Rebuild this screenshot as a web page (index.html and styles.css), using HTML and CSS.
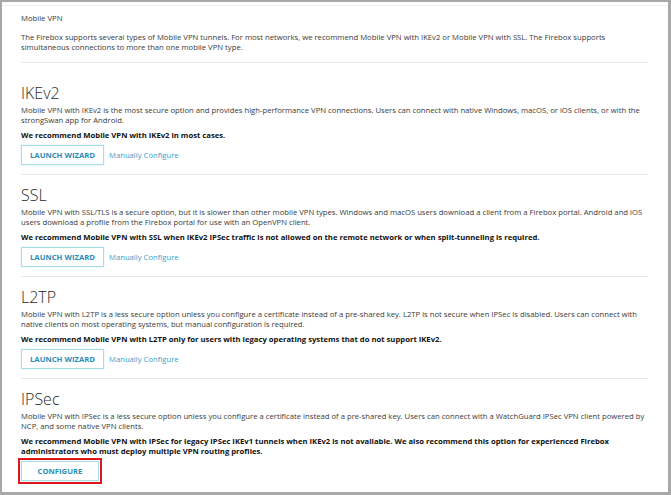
FILE: index.html
```html
<!DOCTYPE html>
<html lang="en">
<head>
  <meta charset="UTF-8">
  <meta name="viewport" content="width=device-width, initial-scale=1.0">
  <title>Mobile VPN</title>
  <link rel="stylesheet" href="styles.css">
</head>
<body>
  <div class="frame">
    <div class="topline"></div>
    <main class="content">
      <div class="intro">
        <div class="page-title">Mobile VPN</div>
        <p>The Firebox supports several types of Mobile VPN tunnels. For most networks, we recommend Mobile VPN with IKEv2 or Mobile VPN with SSL. The Firebox supports simultaneous connections to more than one mobile VPN type.</p>
      </div>

      <section class="vpn-type">
        <h2>IKEv2</h2>
        <p>Mobile VPN with IKEv2 is the most secure option and provides high-performance VPN connections. Users can connect with native Windows, macOS, or iOS clients, or with the strongSwan app for Android.</p>
        <p class="recommend">We recommend Mobile VPN with IKEv2 in most cases.</p>
        <div class="actions">
          <button class="btn-outline">Launch Wizard</button>
          <a href="#" class="link">Manually Configure</a>
        </div>
      </section>

      <section class="vpn-type">
        <h2>SSL</h2>
        <p>Mobile VPN with SSL/TLS is a secure option, but it is slower than other mobile VPN types. Windows and macOS users download a client from a Firebox portal. Android and iOS users download a profile from the Firebox portal for use with an OpenVPN client.</p>
        <p class="recommend">We recommend Mobile VPN with SSL when IKEv2 IPSec traffic is not allowed on the remote network or when split-tunneling is required.</p>
        <div class="actions">
          <button class="btn-outline">Launch Wizard</button>
          <a href="#" class="link">Manually Configure</a>
        </div>
      </section>

      <section class="vpn-type">
        <h2>L2TP</h2>
        <p>Mobile VPN with L2TP is a less secure option unless you configure a certificate instead of a pre-shared key. L2TP is not secure when IPSec is disabled. Users can connect with native clients on most operating systems, but manual configuration is required.</p>
        <p class="recommend">We recommend Mobile VPN with L2TP only for users with legacy operating systems that do not support IKEv2.</p>
        <div class="actions">
          <button class="btn-outline">Launch Wizard</button>
          <a href="#" class="link">Manually Configure</a>
        </div>
      </section>

      <section class="vpn-type">
        <h2>IPSec</h2>
        <p>Mobile VPN with IPSec is a less secure option unless you configure a certificate instead of a pre-shared key. Users can connect with a WatchGuard IPSec VPN client powered by NCP, and some native VPN clients.</p>
        <p class="recommend">We recommend Mobile VPN with IPSec for legacy IPSec IKEv1 tunnels when IKEv2 is not available. We also recommend this option for experienced Firebox administrators who must deploy multiple VPN routing profiles.</p>
        <div class="actions">
          <button class="btn-outline btn-wide highlighted">Configure</button>
        </div>
      </section>
    </main>
  </div>
</body>
</html>
```

FILE: styles.css
```css
/* Mobile VPN overview page */
body {
  margin: 0;
  padding: 0;
  background: #fff;
  font-family: 'Open Sans', 'Noto Sans', sans-serif;
  color: #3a3a3a;
}
.frame {
  box-sizing: border-box;
  width: 671px;
  height: 495px;
  border-style: solid;
  border-color: #a8a8a8;
  border-width: 2px 3px 3px 2px;
  overflow: hidden;
  background: #fff;
}
.topline {
  height: 3px;
  border-bottom: 1px solid #f0f0f0;
}
.content {
  padding: 0 20px 0 19px;
}
.intro {
  padding-top: 7px;
  padding-bottom: 10px;
  border-bottom: 1px solid #e8e8e8;
}
.page-title {
  font-size: 7.7px;
  line-height: 10px;
}
p {
  margin: 0;
  font-size: 7.7px;
  line-height: 10px;
}
.intro p {
  margin-top: 9px;
}
.vpn-type {
  padding: 10px 0 9px;
  border-bottom: 1px solid #e8e8e8;
}
.vpn-type:first-of-type {
  padding-top: 20px;
}
.vpn-type:last-of-type {
  border-bottom: none;
}
h2 {
  margin: 0 0 2px;
  font-size: 16px;
  line-height: 20px;
  font-weight: 300;
  color: #2a2a2a;
}
.recommend {
  margin-top: 5px;
  font-weight: bold;
  color: #111;
}
.actions {
  margin-top: 5px;
  display: flex;
  align-items: center;
  gap: 5px;
}
.btn-outline {
  box-sizing: border-box;
  height: 20px;
  padding: 0 8px;
  background: #fff;
  border: 1px solid #a4dfe8;
  box-shadow: 0 0 1px rgba(120, 200, 215, 0.6);
  color: #2a8db8;
  font-family: inherit;
  font-size: 7.7px;
  font-weight: bold;
  text-transform: uppercase;
  cursor: pointer;
}
.btn-wide {
  width: 78px;
}
.highlighted {
  outline: 2px solid #e0161d;
  outline-offset: 1px;
}
.link {
  color: #3ba0c9;
  font-size: 7.7px;
  text-decoration: none;
}
```
